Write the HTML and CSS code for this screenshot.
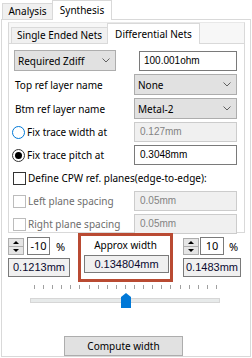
FILE: index.html
```html
<!DOCTYPE html>
<html lang="en">
<head>
  <meta charset="UTF-8" />
  <title>Synthesis</title>
  <link rel="stylesheet" href="styles.css">
</head>
<body>
  <div class="tabs">
    <div class="tab">Analysis</div>
    <div class="tab active">Synthesis</div>
  </div>
  <div class="page">
    <div class="frame">
      <div class="subtabs">
        <div class="subtab">Single Ended Nets</div>
        <div class="subtab active">Differential Nets</div>
      </div>
      <div class="pane">
        <div class="combo zdiff">Required Zdiff
          <svg class="chev" width="8" height="5"><polyline points="0.5,0.5 4,4 7.5,0.5" /></svg>
        </div>
        <div class="field short">100.001ohm</div>

        <div class="label">Top ref layer name</div>
        <div class="combo">None
          <svg class="chev" width="8" height="5"><polyline points="0.5,0.5 4,4 7.5,0.5" /></svg>
        </div>

        <div class="label">Btm ref layer name</div>
        <div class="combo">Metal-2
          <svg class="chev" width="8" height="5"><polyline points="0.5,0.5 4,4 7.5,0.5" /></svg>
        </div>

        <div class="opt"><span class="radio focus"></span>Fix trace width at</div>
        <div class="field off">0.127mm</div>

        <div class="opt"><span class="radio on"></span>Fix trace pitch at</div>
        <div class="field">0.3048mm</div>

        <div class="opt span"><span class="check"></span>Define CPW ref. planes(edge-to-edge):</div>

        <div class="opt off"><span class="check"></span>Left plane spacing</div>
        <div class="field off">0.05mm</div>

        <div class="opt off"><span class="check"></span>Right plane spacing</div>
        <div class="field off">0.05mm</div>
      </div>
    </div>

    <div class="calc">
      <div class="side">
        <div class="spinrow">
          <div class="spin"><span class="up"></span><span class="down"></span></div>
          <div class="pct">-10</div>
          <span class="unit">%</span>
        </div>
        <div class="result">0.1213mm</div>
      </div>
      <div class="approx">
        <div class="approx-label">Approx width</div>
        <div class="result mid">0.134804mm</div>
      </div>
      <div class="side right">
        <div class="spinrow">
          <div class="spin"><span class="up"></span><span class="down"></span></div>
          <div class="pct">10</div>
          <span class="unit">%</span>
        </div>
        <div class="result">0.1483mm</div>
      </div>
    </div>

    <div class="slider">
      <div class="ticks">
        <i></i><i></i><i></i><i></i><i></i><i></i><i></i><i></i><i></i><i></i><i></i>
        <i></i><i></i><i></i><i></i><i></i><i></i><i></i><i></i><i></i><i></i>
      </div>
      <div class="track"></div>
      <svg class="thumb" width="10" height="15" viewBox="0 0 10 15"><polygon points="0,4 5,0 10,4 10,15 0,15" /></svg>
    </div>

    <button class="compute">Compute width</button>
  </div>
</body>
</html>
```

FILE: styles.css
```css
body { margin: 0; width: 252px; height: 358px; background: #fff; font-family: "Noto Sans", sans-serif; font-size: 10px; color: #000; overflow: hidden; }

/* outer tabs */
.tabs { display: flex; align-items: flex-end; height: 19px; padding-left: 2px; }
.tab { box-sizing: border-box; width: 51px; height: 16px; border: 1px solid #d9d9d9; border-bottom: none; background: #f0f0f0; text-align: center; line-height: 15px; }
.tab.active { width: 60px; height: 20px; margin-left: -1px; margin-bottom: -1px; background: #fff; position: relative; z-index: 1; line-height: 19px; }

.page { box-sizing: border-box; margin-left: 1px; width: 250px; height: 338px; border: 1px solid #d9d9d9; }

/* inner frame with sub tabs */
.frame { box-sizing: border-box; margin: 2px 0 0 6px; width: 237px; height: 211px; border: 1px solid #d9d9d9; border-top-color: #e8e8e8; background: #f7f7f7; }
.subtabs { display: flex; align-items: flex-end; height: 20px; padding-left: 2px; }
.subtab { box-sizing: border-box; width: 97px; height: 16px; border: 1px solid #d9d9d9; border-bottom: none; background: #f0f0f0; text-align: center; line-height: 15px; }
.subtab.active { width: 93px; height: 21px; margin-left: -1px; margin-bottom: -1px; background: #fff; position: relative; z-index: 1; line-height: 20px; }

.pane { box-sizing: border-box; height: 189px; border-top: 1px solid #d9d9d9; background: #fff; padding: 6px 7px 0 3px; display: grid; grid-template-columns: 1fr 103px; grid-template-rows: 21px 21px 21px 20px 20px 20px 20px 20px; row-gap: 3px; align-items: center; }

.label { padding-left: 3px; }
.opt { display: flex; align-items: center; gap: 2px; }
.opt.span { grid-column: 1 / 3; }
.opt.off { color: #6d6d6d; }

.combo { box-sizing: border-box; height: 21px; border: 1px solid #adadad; background: #e1e1e1; padding: 0 3px; display: flex; align-items: center; justify-content: space-between; }
.combo.zdiff { width: 102px; margin-left: 2px; padding-left: 3px; }
.chev { fill: none; stroke: #606060; stroke-width: 1; margin-right: 2px; }

.field { box-sizing: border-box; height: 20px; border: 1px solid #7a7a7a; background: #fff; padding-left: 5px; line-height: 18px; font-family: "Liberation Sans", sans-serif; font-size: 10px; }
.field.short { width: 98px; justify-self: end; padding-left: 4px; }
.field.off { border-color: #cccccc; background: #f0f0f0; color: #838383; }

.radio { box-sizing: border-box; width: 13px; height: 13px; border: 1px solid #333; border-radius: 50%; background: #fff; position: relative; }
.radio.focus { border-color: #0078d7; }
.radio.on::after { content: ""; position: absolute; left: 2px; top: 2px; width: 7px; height: 7px; border-radius: 50%; background: #000; }
.check { box-sizing: border-box; width: 13px; height: 13px; margin-left: 1px; border: 1px solid #333; background: #fff; }
.opt.off .check { border-color: #bcbcbc; }

/* width calculation */
.calc { display: flex; padding-left: 6px; height: 49px; }
.side { width: 62px; padding-top: 4px; }
.side.right { width: 58px; margin-left: 10px; }
.spinrow { display: flex; align-items: center; height: 18px; }
.spin { box-sizing: border-box; width: 16px; height: 17px; border: 1px solid #adadad; background: #e5e5e5; display: flex; flex-direction: column; }
.spin span { flex: 1; position: relative; }
.spin .up { border-bottom: 1px solid #adadad; }
.spin .up::after, .spin .down::after { content: ""; position: absolute; left: 4px; top: 2px; border-left: 3px solid transparent; border-right: 3px solid transparent; }
.spin .up::after { border-bottom: 3px solid #000; }
.spin .down::after { border-top: 3px solid #000; top: 2px; }
.pct { box-sizing: border-box; width: 23px; height: 18px; margin-left: 3px; border: 1px solid #7a7a7a; background: #fff; text-align: center; line-height: 16px; font-size: 11px; }
.right .pct { width: 24px; margin-left: 1px; }
.unit { margin-left: 6px; font-size: 11px; }
.right .unit { margin-left: 5px; }
.result { box-sizing: border-box; height: 19px; margin-top: 3px; border: 1px solid #7a7a7a; background: #f0f0f0; text-align: center; line-height: 17px; font-family: "Liberation Sans", sans-serif; font-size: 11px; color: #0a0a30; }

.approx { box-sizing: border-box; width: 95px; height: 49px; margin-left: 8px; border: 3px solid #b94a32; }
.approx-label { text-align: center; padding-top: 1px; height: 16px; line-height: 16px; }
.result.mid { width: 85px; height: 18px; margin: 2px 0 0 3px; line-height: 16px; }

/* slider */
.slider { position: relative; height: 30px; }
.ticks { display: flex; justify-content: space-between; width: 183px; margin: 3px 0 0 32px; height: 4px; }
.ticks i { width: 1px; height: 4px; background: #a0a0a0; }
.track { box-sizing: border-box; width: 190px; height: 5px; margin: 9px 0 0 28px; border: 1px solid #d6d6d6; background: #e7eaea; }
.thumb { position: absolute; left: 119px; top: 8px; fill: #0078d7; }

.compute { display: block; box-sizing: border-box; width: 119px; height: 20px; margin: 21px 0 0 62px; border: 1px solid #adadad; background: #e1e1e1; font-family: "Noto Sans", sans-serif; font-size: 10px; color: #000; padding: 0; }
```
